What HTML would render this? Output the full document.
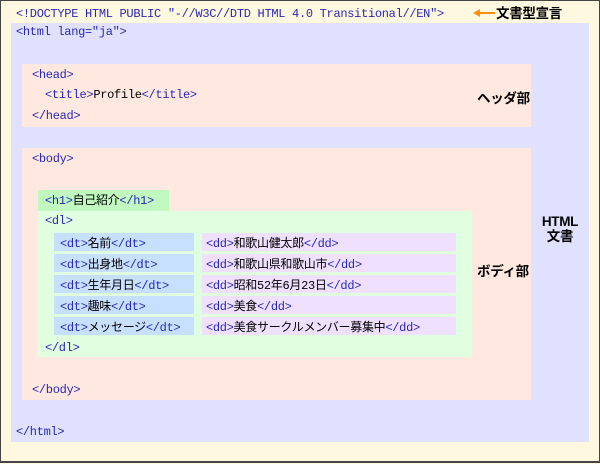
<!DOCTYPE html>
<html><head><meta charset="utf-8"><style>
*{margin:0;padding:0;box-sizing:border-box}
body{width:600px;height:464px;position:relative;background:#fff8e0;overflow:hidden;font-family:"Liberation Mono","Noto Sans CJK JP",monospace;font-size:12px;letter-spacing:-0.3px;color:#000}
#frame{position:absolute;left:0;top:0;width:600px;height:463px;border:1px solid #444;border-bottom:2px solid #444}
.b{position:absolute}
.t{position:absolute;white-space:nowrap;line-height:14px;margin-top:2px}
.g{color:#2828b4}
.lab{position:absolute;font-family:"Liberation Sans","Noto Sans CJK JP",sans-serif;font-weight:bold;font-size:13.5px;line-height:15px;white-space:nowrap;margin-top:1px}
</style></head><body>
<div id="frame"></div>
<div class="b" style="left:11px;top:23px;width:578px;height:419px;background:#e0e0ff"></div>
<div class="b" style="left:22px;top:64px;width:509px;height:63px;background:#ffe8e0"></div>
<div class="b" style="left:22px;top:148px;width:509px;height:252px;background:#ffe8e0"></div>
<div class="b" style="left:38px;top:190px;width:131px;height:21px;background:#c0f8c0"></div>
<div class="b" style="left:38px;top:211px;width:434px;height:146px;background:#e0ffe0"></div>
<div class="b" style="left:54px;top:233px;width:140px;height:18px;background:#c8e0ff"></div>
<div class="b" style="left:54px;top:254px;width:140px;height:18px;background:#c8e0ff"></div>
<div class="b" style="left:54px;top:275px;width:140px;height:18px;background:#c8e0ff"></div>
<div class="b" style="left:54px;top:296px;width:140px;height:18px;background:#c8e0ff"></div>
<div class="b" style="left:54px;top:317px;width:140px;height:18px;background:#c8e0ff"></div>
<div class="b" style="left:202px;top:233px;width:254px;height:18px;background:#f0e0ff"></div>
<div class="b" style="left:202px;top:254px;width:254px;height:18px;background:#f0e0ff"></div>
<div class="b" style="left:202px;top:275px;width:254px;height:18px;background:#f0e0ff"></div>
<div class="b" style="left:202px;top:296px;width:254px;height:18px;background:#f0e0ff"></div>
<div class="b" style="left:202px;top:317px;width:254px;height:18px;background:#f0e0ff"></div>

<div class="t g" style="left:16px;top:5px">&lt;!DOCTYPE HTML PUBLIC "-//W3C//DTD HTML 4.0 Transitional//EN"&gt;</div>
<svg class="b" style="left:472px;top:8px" width="24" height="10"><path d="M1 5 L8 1 L8 4 L23 4 L23 6 L8 6 L8 9 Z" fill="#ff9010"/></svg>
<div class="lab" style="left:496px;top:5px">文書型宣言</div>
<div class="t g" style="left:16px;top:23px">&lt;html lang="ja"&gt;</div>
<div class="t g" style="left:32px;top:66px">&lt;head&gt;</div>
<div class="t" style="left:45px;top:86px"><span class="g">&lt;title&gt;</span>Profile<span class="g">&lt;/title&gt;</span></div>
<div class="t g" style="left:32px;top:107px">&lt;/head&gt;</div>
<div class="lab" style="left:477px;top:90px">ヘッダ部</div>
<div class="t g" style="left:32px;top:150px">&lt;body&gt;</div>
<div class="t" style="left:45px;top:192px"><span class="g">&lt;h1&gt;</span>自己紹介<span class="g">&lt;/h1&gt;</span></div>
<div class="t g" style="left:45px;top:212px">&lt;dl&gt;</div>
<div class="t" style="left:60px;top:235px"><span class="g">&lt;dt&gt;</span>名前<span class="g">&lt;/dt&gt;</span></div>
<div class="t" style="left:60px;top:256px"><span class="g">&lt;dt&gt;</span>出身地<span class="g">&lt;/dt&gt;</span></div>
<div class="t" style="left:60px;top:277px"><span class="g">&lt;dt&gt;</span>生年月日<span class="g">&lt;/dt&gt;</span></div>
<div class="t" style="left:60px;top:298px"><span class="g">&lt;dt&gt;</span>趣味<span class="g">&lt;/dt&gt;</span></div>
<div class="t" style="left:60px;top:319px"><span class="g">&lt;dt&gt;</span>メッセージ<span class="g">&lt;/dt&gt;</span></div>
<div class="t" style="left:206px;top:235px"><span class="g">&lt;dd&gt;</span>和歌山健太郎<span class="g">&lt;/dd&gt;</span></div>
<div class="t" style="left:206px;top:256px"><span class="g">&lt;dd&gt;</span>和歌山県和歌山市<span class="g">&lt;/dd&gt;</span></div>
<div class="t" style="left:206px;top:277px"><span class="g">&lt;dd&gt;</span>昭和52年6月23日<span class="g">&lt;/dd&gt;</span></div>
<div class="t" style="left:206px;top:298px"><span class="g">&lt;dd&gt;</span>美食<span class="g">&lt;/dd&gt;</span></div>
<div class="t" style="left:206px;top:319px"><span class="g">&lt;dd&gt;</span>美食サークルメンバー募集中<span class="g">&lt;/dd&gt;</span></div>
<div class="t g" style="left:45px;top:339px">&lt;/dl&gt;</div>
<div class="lab" style="left:477px;top:263px">ボディ部</div>
<div class="t g" style="left:32px;top:381px">&lt;/body&gt;</div>
<div class="t g" style="left:16px;top:423px">&lt;/html&gt;</div>
<div class="lab" style="left:536px;top:213px;width:48px;text-align:center">HTML<br>文書</div>
</body></html>
